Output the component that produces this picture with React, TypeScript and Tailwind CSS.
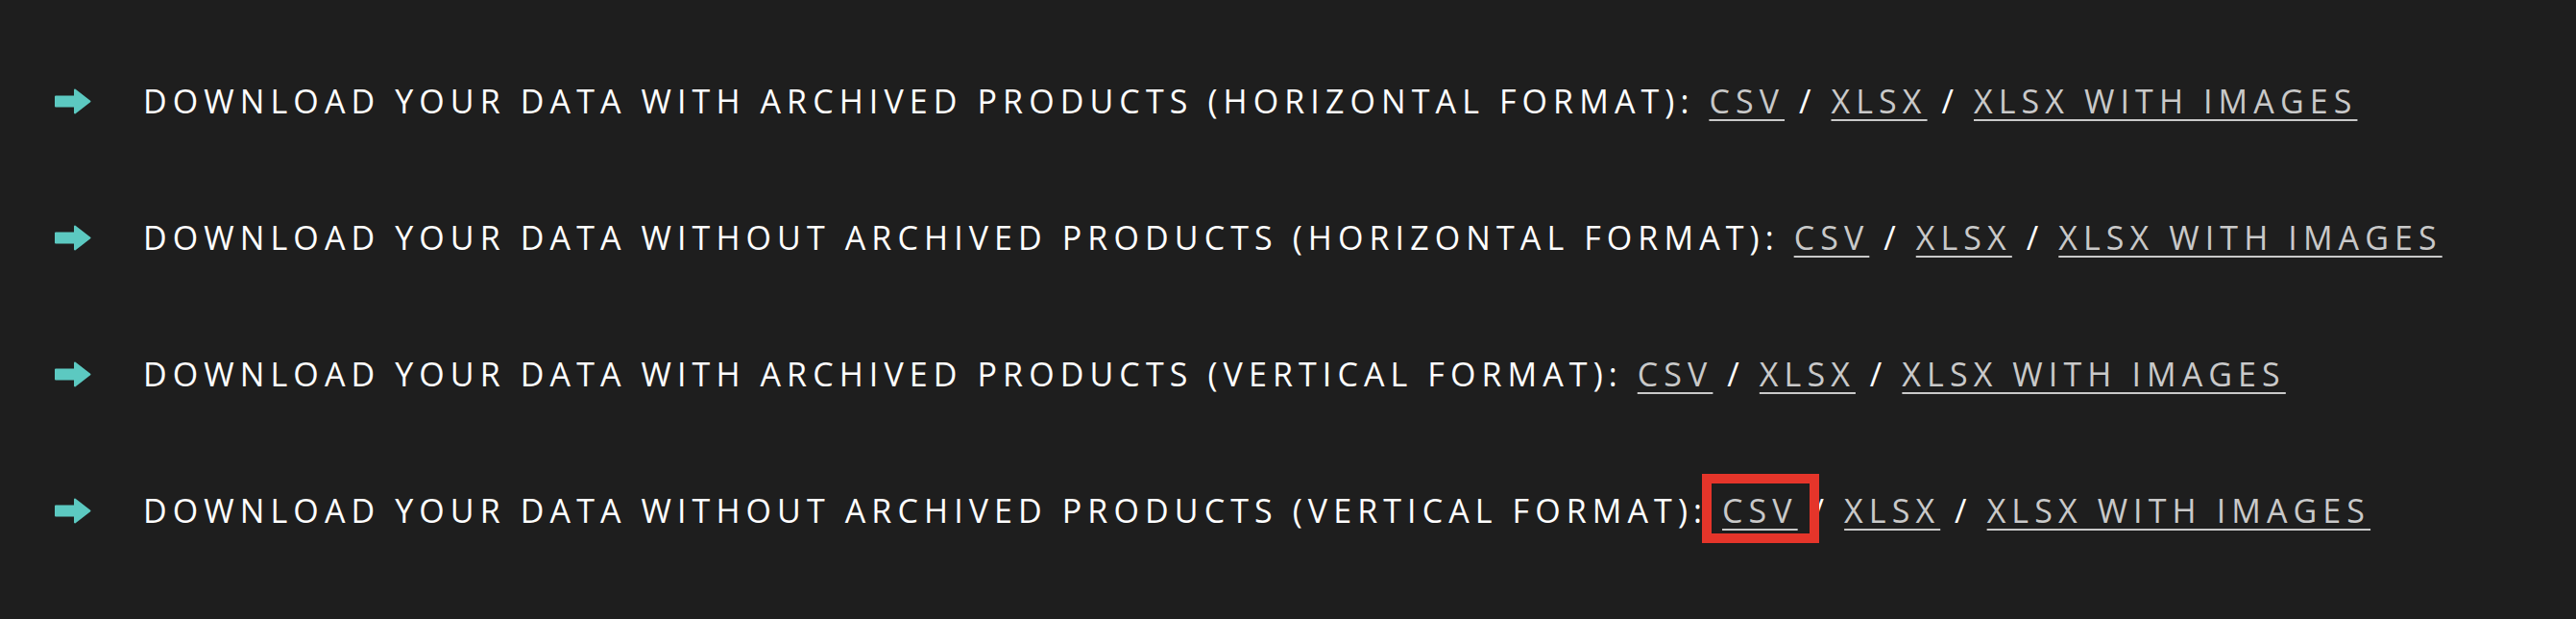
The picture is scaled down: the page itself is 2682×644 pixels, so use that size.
import React from 'react';

type Row = { label: string; highlight?: boolean };

const rows: Row[] = [
    { label: 'Download your data with archived products (horizontal format):' },
    { label: 'Download your data without archived products (horizontal format):' },
    { label: 'Download your data with archived products (vertical format):' },
    { label: 'Download your data without archived products (vertical format):', highlight: true },
];

const Arrow = () => (
    <svg width="39" height="27" viewBox="0 0 39 27" className="shrink-0">
        <path d="M2 8.5 H22 V1.5 L37.5 13.5 L22 25.5 V18.5 H2 Z" fill="#5cc9c1" stroke="#5cc9c1" strokeWidth="2" strokeLinejoin="round" />
    </svg>
);

const App: React.FC = () => {
    return (
        <div className="bg-[#1e1e1e] min-h-screen w-full pt-[34px] font-['Open_Sans',sans-serif] text-[34px] tracking-[6.1px] uppercase">
            {rows.map((row, idx) => (
                <div key={idx} className="h-[142px] flex items-center pl-[56px]">
                    <Arrow />
                    <p className="ml-[54px] text-white whitespace-nowrap leading-none">
                        {row.label}{' '}
                        <span className="relative">
                            <a href="#" className="text-[#c9c9c9] underline underline-offset-[6px] decoration-2">CSV</a>
                            {row.highlight && (
                                <span className="absolute -left-[21px] -right-[22px] -top-[15px] -bottom-[11px] border-[10px] border-[#e5352a]"></span>
                            )}
                        </span>
                        {' / '}
                        <a href="#" className="text-[#c9c9c9] underline underline-offset-[6px] decoration-2">XLSX</a>
                        {' / '}
                        <a href="#" className="text-[#c9c9c9] underline underline-offset-[6px] decoration-2">XLSX with images</a>
                    </p>
                </div>
            ))}
        </div>
    );
};

export default App;
